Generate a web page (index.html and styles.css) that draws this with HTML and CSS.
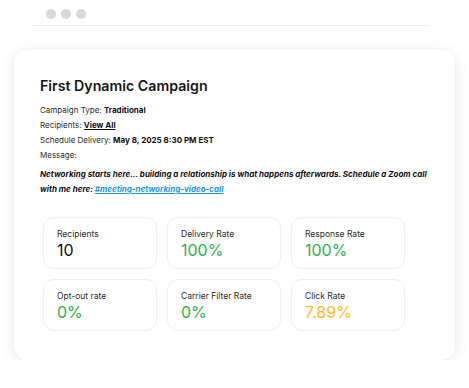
FILE: index.html
```html
<!DOCTYPE html>
<html lang="en">
<head>
  <meta charset="UTF-8">
  <meta name="viewport" content="width=device-width, initial-scale=1.0">
  <title>First Dynamic Campaign</title>
  <link rel="stylesheet" href="styles.css">
</head>
<body>
  <div class="window-bar">
    <div class="dots">
      <span class="dot"></span>
      <span class="dot"></span>
      <span class="dot"></span>
    </div>
  </div>

  <div class="campaign-card">
    <h1 class="title">First Dynamic Campaign</h1>
    <div class="details">
      <div class="detail">Campaign Type: <b>Traditional</b></div>
      <div class="detail">Recipients: <a class="view-all" href="#">View All</a></div>
      <div class="detail">Schedule Delivery: <b>May 8, 2025 8:30 PM EST</b></div>
      <div class="detail">Message:</div>
    </div>
    <p class="message">Networking starts here... building a relationship is what happens afterwards. Schedule a Zoom call with me here: <a class="msg-link" href="#">#meeting-networking-video-call</a></p>

    <div class="stats">
      <div class="stat">
        <div class="stat-label">Recipients</div>
        <div class="stat-value">10</div>
      </div>
      <div class="stat">
        <div class="stat-label">Delivery Rate</div>
        <div class="stat-value green">100%</div>
      </div>
      <div class="stat">
        <div class="stat-label">Response Rate</div>
        <div class="stat-value green">100%</div>
      </div>
      <div class="stat">
        <div class="stat-label">Opt-out rate</div>
        <div class="stat-value green">0%</div>
      </div>
      <div class="stat">
        <div class="stat-label">Carrier Filter Rate</div>
        <div class="stat-value green">0%</div>
      </div>
      <div class="stat">
        <div class="stat-label">Click Rate</div>
        <div class="stat-value yellow">7.89%</div>
      </div>
    </div>
  </div>
</body>
</html>
```

FILE: styles.css
```css
body {
  font-family: Inter, "Noto Sans", sans-serif;
  background-color: #fff;
  color: #1a1a1a;
  margin: 0;
  padding: 0 14px;
}

.window-bar {
  margin-left: 18px;
  width: 397px;
  height: 25px;
  border-bottom: 1px solid #ececec;
}

.dots {
  display: flex;
  gap: 5px;
  padding: 9px 0 0 14px;
}

.dot {
  width: 10px;
  height: 10px;
  border-radius: 50%;
  background-color: #d9d9d9;
}

.campaign-card {
  margin-top: 24px;
  width: 441px;
  box-sizing: border-box;
  padding: 26px 26px 29px;
  background-color: #fff;
  border-radius: 14px;
  box-shadow: 0 2px 16px rgba(0, 0, 0, 0.1);
}

.title {
  margin: 0;
  font-size: 14.2px;
  line-height: 20px;
  font-weight: 600;
  color: #161616;
}

.details {
  margin-top: 7px;
}

.detail {
  font-size: 8px;
  line-height: 15px;
  color: #2b2b2b;
}

.detail b {
  font-weight: 700;
  color: #111;
}

.view-all {
  color: #111;
  font-weight: 700;
  text-decoration: underline;
}

.message {
  margin: 4px -12px 0 0;
  font-size: 8px;
  line-height: 15px;
  font-weight: 700;
  font-style: italic;
  color: #111;
}

.msg-link {
  color: #2196f3;
  text-decoration: underline;
}

.stats {
  display: grid;
  grid-template-columns: repeat(3, 114px);
  gap: 10px;
  margin: 20px 0 0 3px;
}

.stat {
  height: 52px;
  box-sizing: border-box;
  padding: 10px 13px;
  border: 1px solid #f0f0f0;
  border-radius: 11px;
}

.stat-label {
  font-size: 8.5px;
  line-height: 12px;
  color: #2b2b2b;
}

.stat-value {
  font-size: 16px;
  line-height: 20px;
  color: #111;
}

.green {
  color: #2bb24c;
}

.yellow {
  color: #fbbc1c;
}
```
